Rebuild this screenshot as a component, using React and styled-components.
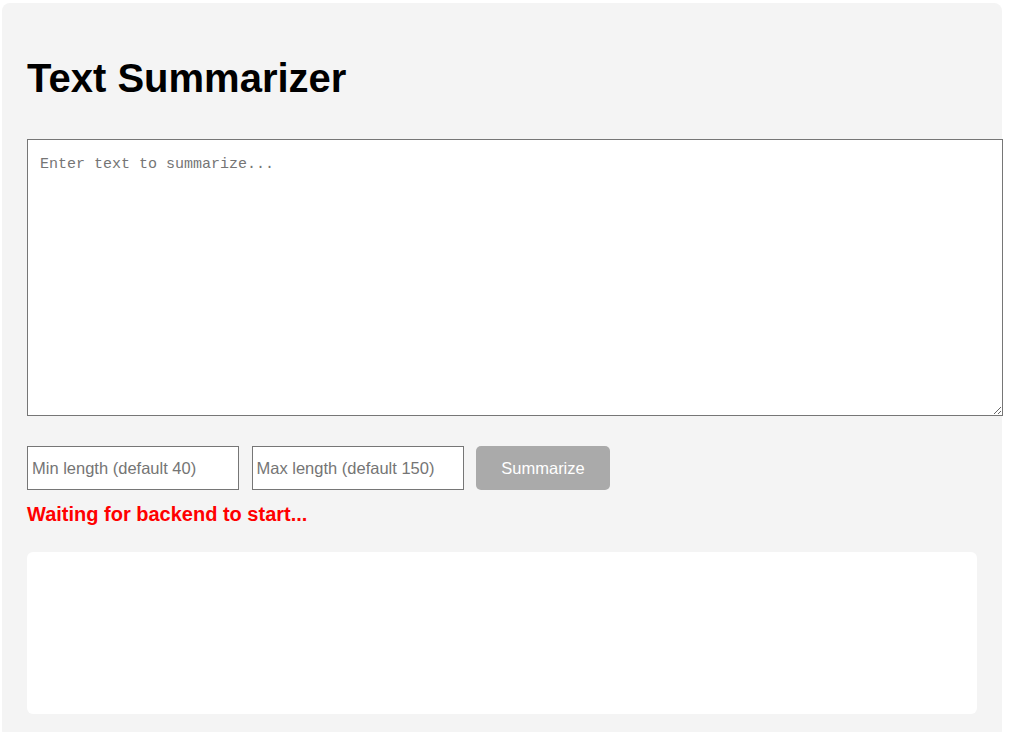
import React, { useState } from "react";
import styled, { createGlobalStyle } from "styled-components";

const GlobalStyle = createGlobalStyle`
  body {
    margin: 0;
    background: #ffffff;
    font-family: "Liberation Sans", Arial, sans-serif;
  }
`;

const Container = styled.div`
  box-sizing: border-box;
  width: 1000px;
  margin: 3px 0 0 2px;
  padding: 53px 25px 25px;
  background: #f4f4f4;
  border-radius: 8px;
`;

const Title = styled.h1`
  margin: 0 0 38px;
  font-size: 40px;
  line-height: 45px;
  font-weight: bold;
  color: #000;
`;

const TextInput = styled.textarea`
  display: block;
  box-sizing: content-box;
  width: 100%;
  height: 251px;
  margin: 0;
  padding: 14px 12px 10px;
  border: 1px solid #767676;
  background: #fff;
  font-family: "Liberation Mono", "Courier New", monospace;
  font-size: 15px;
  line-height: 1.5;
  resize: vertical;

  &::placeholder {
    color: #757575;
  }
`;

const Controls = styled.div`
  display: flex;
  align-items: stretch;
  gap: 12.5px;
  margin-top: 30px;
  height: 44px;
`;

const LengthInput = styled.input`
  box-sizing: border-box;
  width: 212px;
  height: 44px;
  margin: 0;
  padding: 0 4px;
  border: 1px solid #767676;
  background: #fff;
  font-family: "Liberation Sans", Arial, sans-serif;
  font-size: 16.5px;

  &::placeholder {
    color: #757575;
  }
`;

const Button = styled.button`
  box-sizing: border-box;
  width: 134px;
  height: 44px;
  border: none;
  border-radius: 5px;
  background: #aaaaaa;
  color: #fff;
  font-family: "Liberation Sans", Arial, sans-serif;
  font-size: 16.5px;
  cursor: ${(p) => (p.disabled ? "not-allowed" : "pointer")};
`;

const Status = styled.p`
  margin: 13px 0 26px;
  font-size: 20px;
  line-height: 23px;
  font-weight: bold;
  color: ${(p) => p.color || "red"};
`;

const Output = styled.div`
  box-sizing: border-box;
  height: 162px;
  padding: 15px;
  background: #fff;
  border-radius: 6px;
`;

export default function App() {
  const [text, setText] = useState("");
  const [minLen, setMinLen] = useState("");
  const [maxLen, setMaxLen] = useState("");
  const ready = false;

  return (
    <>
      <GlobalStyle />
      <Container>
        <Title>Text Summarizer</Title>
        <TextInput
          placeholder="Enter text to summarize..."
          value={text}
          onChange={(e) => setText(e.target.value)}
        />
        <Controls>
          <LengthInput
            type="number"
            placeholder="Min length (default 40)"
            value={minLen}
            onChange={(e) => setMinLen(e.target.value)}
          />
          <LengthInput
            type="number"
            placeholder="Max length (default 150)"
            value={maxLen}
            onChange={(e) => setMaxLen(e.target.value)}
          />
          <Button disabled={!ready}>Summarize</Button>
        </Controls>
        <Status>Waiting for backend to start...</Status>
        <Output />
      </Container>
    </>
  );
}
